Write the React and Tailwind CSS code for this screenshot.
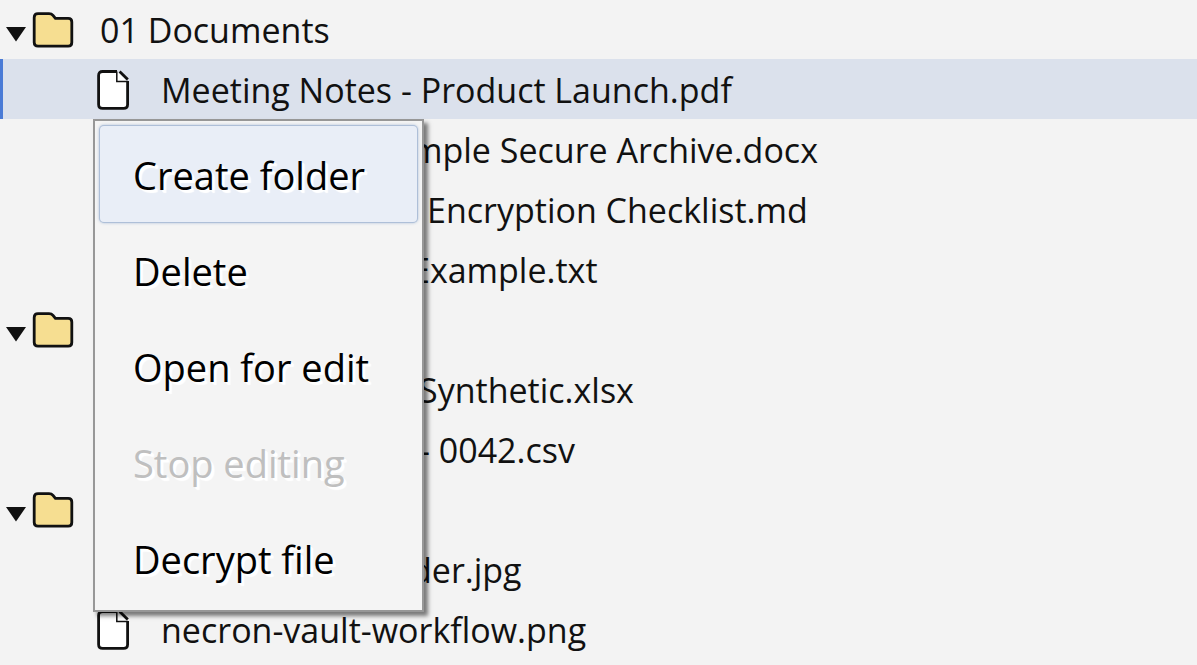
const rows = [
  { kind: 'folder', name: '01 Documents', open: true },
  { kind: 'file', name: 'Meeting Notes - Product Launch.pdf', selected: true },
  { kind: 'file', name: 'mple Secure Archive.docx', indent: 'pl-[282px]' },
  { kind: 'file', name: 'Encryption Checklist.md', indent: 'pl-[298px]' },
  { kind: 'file', name: 'Example.txt', indent: 'pl-[282px]' },
  { kind: 'folder', name: '' },
  { kind: 'file', name: 'Synthetic.xlsx', indent: 'pl-[290px]' },
  { kind: 'file', name: '- 0042.csv', indent: 'pl-[290px]' },
  { kind: 'folder', name: '' },
  { kind: 'file', name: 'der.jpg', indent: 'pl-[282px]' },
  { kind: 'file', name: 'necron-vault-workflow.png' },
];

const actions = [
  { label: 'Create folder', active: true },
  { label: 'Delete' },
  { label: 'Open for edit' },
  { label: 'Stop editing', disabled: true },
  { label: 'Decrypt file' },
];

function FolderIcon() {
  return (
    <svg className="h-9 w-11 shrink-0" viewBox="0 0 44 36" aria-hidden="true">
      <path
        d="M6 1.6 H17 Q19.6 1.6 21 3.4 L23.4 6.4 H36.2 Q39.8 6.4 39.8 10 V30.6 Q39.8 34.2 36.2 34.2 H6 Q2.2 34.2 2.2 30.6 V5.4 Q2.2 1.6 6 1.6Z"
        fill="#f6de91"
        stroke="#111"
        strokeWidth="2.8"
        strokeLinejoin="round"
      />
    </svg>
  );
}

function FileIcon() {
  return (
    <svg className="h-10 w-8 shrink-0" viewBox="0 0 32 40" aria-hidden="true">
      <path
        d="M20 1.5 H5.6 Q1.6 1.5 1.6 5.5 V34.5 Q1.6 38.4 5.6 38.4 H26.6 Q30.6 38.4 30.6 34.5 V11.4 L20.5 1.5Z"
        fill="#fff"
      />
      <path
        d="M20 1.5 H5.6 Q1.6 1.5 1.6 5.5 V34.5 Q1.6 38.4 5.6 38.4 H26.6 Q30.6 38.4 30.6 34.5 V11"
        fill="none"
        stroke="#111"
        strokeWidth="2.8"
      />
      <path d="M19.8 1.5 V11.5 H31" fill="none" stroke="#111" strokeWidth="1.5" />
      <path d="M22.6 1.4 L30.8 9.4" stroke="#111" strokeWidth="2.8" />
    </svg>
  );
}

function Row({ row }) {
  if (row.kind === 'folder') {
    return (
      <li role="treeitem" aria-expanded="true" className="flex h-15 items-center pt-0.5 pl-1.5">
        <button type="button" aria-label="Collapse folder" className="mt-2 shrink-0">
          <svg className="h-4 w-5" viewBox="0 0 20 16" aria-hidden="true">
            <path d="M0 1 H20 L10 15.5Z" fill="#111" />
          </svg>
        </button>
        <span className="ml-1.5 flex items-center gap-6">
          <FolderIcon />
          {row.name}
        </span>
      </li>
    );
  }
  const tone = row.selected ? 'border-[#4a7bd6] bg-[#dbe1ec]' : 'border-transparent';
  return (
    <li
      role="treeitem"
      aria-selected={Boolean(row.selected)}
      className={`flex h-15 items-center border-l-3 pt-0.5 pl-[94px] ${tone}`}
    >
      <FileIcon />
      <span className={row.indent || 'pl-8'}>{row.name}</span>
    </li>
  );
}

function ContextMenu() {
  return (
    <div
      role="menu"
      aria-label="File actions"
      className="absolute top-[119px] left-[93px] w-[331px] border-2 border-[#979797] bg-[#f4f4f4] p-[5px] pb-1 text-[38px] leading-none text-black shadow-[4px_4px_4px_0_rgba(0,0,0,0.5)]"
    >
      {actions.map((action) => (
        <button
          key={action.label}
          type="button"
          role="menuitem"
          disabled={action.disabled}
          className={`block h-24 w-full rounded-sm pt-0.5 pl-[33px] text-left whitespace-nowrap [text-shadow:2px_2px_0_#fff,3px_3px_1px_#fff] disabled:text-[#bfbfbf] ${
            action.active
              ? 'bg-[#e9eef7] shadow-[0_0_0_1px_#aebfd8,0_0_3px_1px_#aebfd8]'
              : ''
          }`}
        >
          {action.label}
        </button>
      ))}
    </div>
  );
}

export default function App() {
  return (
    <main className="relative h-screen overflow-hidden bg-[#f3f3f3] font-['Open_Sans','Noto_Sans',sans-serif] text-[34px] leading-none whitespace-nowrap text-[#111]">
      <ul role="tree" aria-label="Vault files" className="-mt-px">
        {rows.map((row, i) => (
          <Row key={i} row={row} />
        ))}
      </ul>
      <ContextMenu />
    </main>
  );
}
